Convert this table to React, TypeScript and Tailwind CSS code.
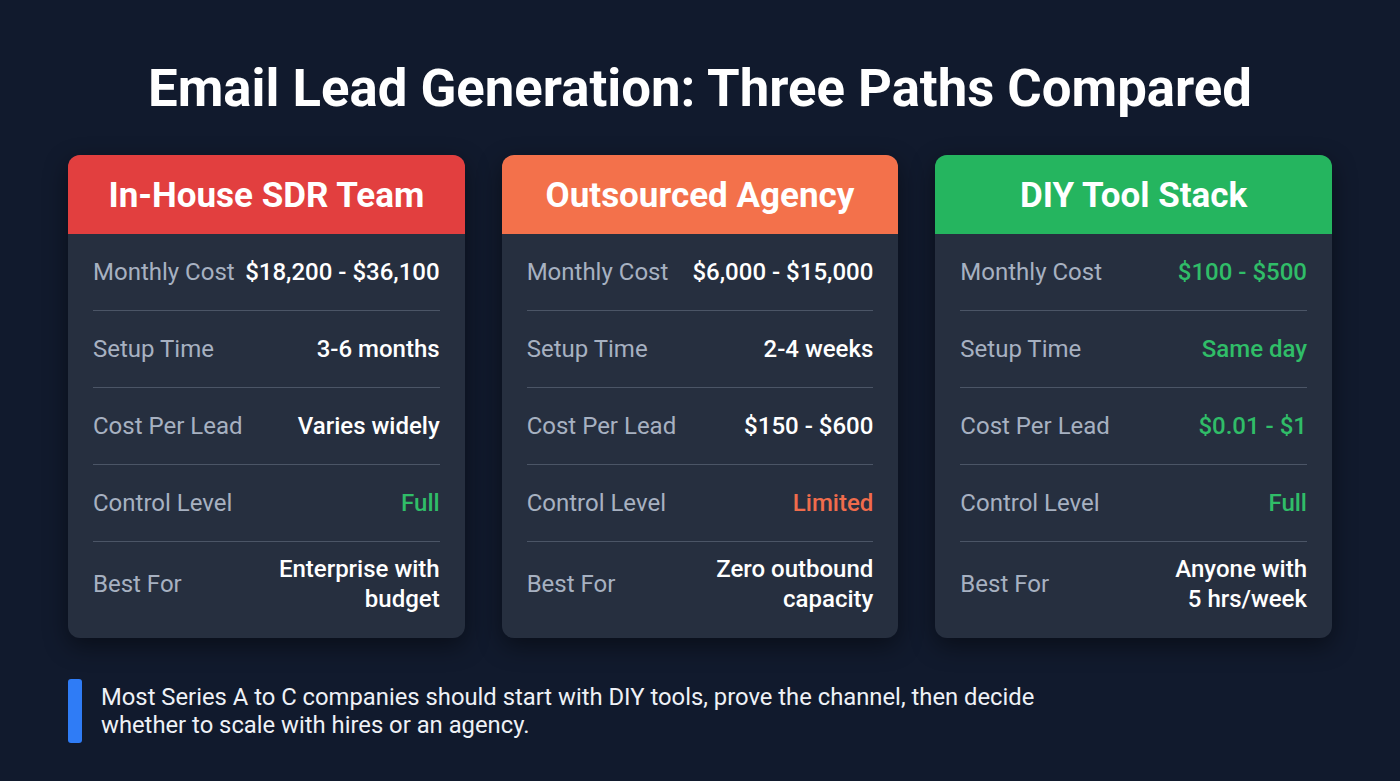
import React from 'react';

type Row = { label: string; value: React.ReactNode; tone?: 'green' | 'orange' };

type Path = { title: string; header: string; rows: Row[] };

const paths: Path[] = [
  {
    title: 'In-House SDR Team',
    header: 'bg-[#e23f3f]',
    rows: [
      { label: 'Monthly Cost', value: '$18,200 - $36,100' },
      { label: 'Setup Time', value: '3-6 months' },
      { label: 'Cost Per Lead', value: 'Varies widely' },
      { label: 'Control Level', value: 'Full', tone: 'green' },
      { label: 'Best For', value: <>Enterprise with<br />budget</> },
    ],
  },
  {
    title: 'Outsourced Agency',
    header: 'bg-[#f3714b]',
    rows: [
      { label: 'Monthly Cost', value: '$6,000 - $15,000' },
      { label: 'Setup Time', value: '2-4 weeks' },
      { label: 'Cost Per Lead', value: '$150 - $600' },
      { label: 'Control Level', value: 'Limited', tone: 'orange' },
      { label: 'Best For', value: <>Zero outbound<br />capacity</> },
    ],
  },
  {
    title: 'DIY Tool Stack',
    header: 'bg-[#25b55f]',
    rows: [
      { label: 'Monthly Cost', value: '$100 - $500', tone: 'green' },
      { label: 'Setup Time', value: 'Same day', tone: 'green' },
      { label: 'Cost Per Lead', value: '$0.01 - $1', tone: 'green' },
      { label: 'Control Level', value: 'Full', tone: 'green' },
      { label: 'Best For', value: <>Anyone with<br />5 hrs/week</> },
    ],
  },
];

function PathCard({ path }: { path: Path }) {
  return (
    <div className="flex flex-col rounded-xl overflow-hidden bg-[#262f3f] shadow-[0_8px_24px_rgba(0,0,0,0.45)]">
      <div className={`${path.header} h-[79px] pt-[3px] flex items-center justify-center`}>
        <h2 className="text-[35px] font-bold text-white">{path.title}</h2>
      </div>
      <div className="flex flex-col px-[25px] pb-[13px]">
        {path.rows.map((row, i) => (
          <div
            key={row.label}
            className={`flex items-center justify-between gap-2 ${i < 4 ? 'h-[77px] border-b border-[#4b5566]' : 'h-[83px]'}`}
          >
            <span className="text-[24px] text-[#a7b1c1] whitespace-nowrap">{row.label}</span>
            <span
              className={`text-[24px] font-medium text-right leading-[30px] whitespace-nowrap ${
                row.tone === 'green' ? 'text-[#30bd68]' : row.tone === 'orange' ? 'text-[#f06c4c]' : 'text-white'
              }`}
            >
              {row.value}
            </span>
          </div>
        ))}
      </div>
    </div>
  );
}

export default function App() {
  return (
    <div className="w-[1400px] h-[781px] bg-[#111a2d] font-['Roboto',sans-serif] flex flex-col px-[68px]">
      <h1 className="text-center text-white font-bold text-[52.7px] mt-[56px] h-[64px] leading-[64px]">
        Email Lead Generation: Three Paths Compared
      </h1>
      <div className="grid grid-cols-3 gap-[37px] mt-[35px]">
        {paths.map((p) => (
          <PathCard key={p.title} path={p} />
        ))}
      </div>
      <div className="flex items-center gap-[19px] mt-[41px]">
        <div className="w-[14px] h-[64px] rounded-[3px] bg-[#2f7cf6]" />
        <p className="text-[23.8px] leading-[28px] text-[#eef1f6]">
          Most Series A to C companies should start with DIY tools, prove the channel, then decide
          <br />
          whether to scale with hires or an agency.
        </p>
      </div>
    </div>
  );
}
